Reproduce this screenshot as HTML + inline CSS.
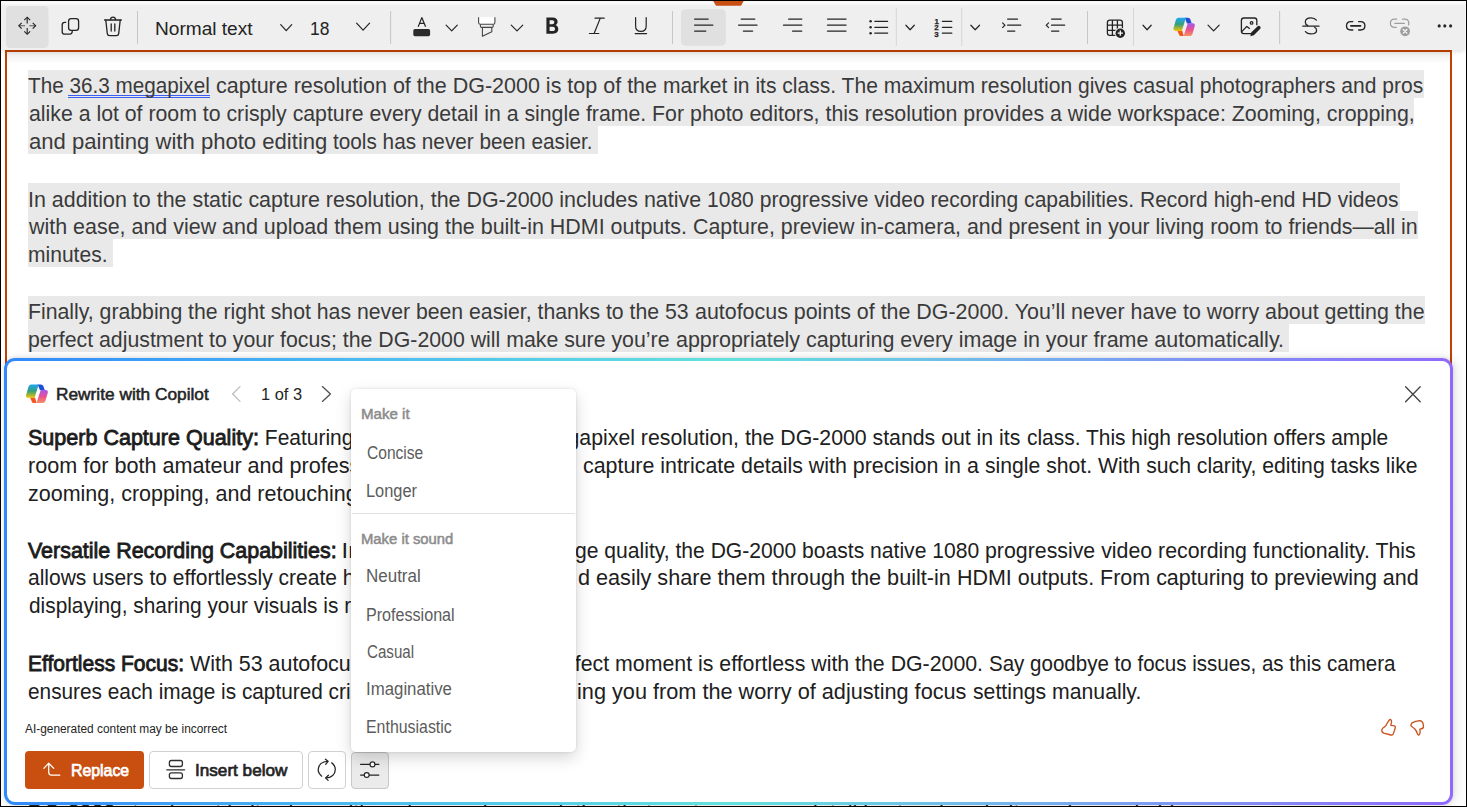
<!DOCTYPE html>
<html><head><meta charset="utf-8">
<style>
html,body{margin:0;padding:0;}
body{width:1467px;height:807px;position:relative;overflow:hidden;background:#fff;font-family:"Liberation Sans",sans-serif;}
.a{position:absolute;}
.t{position:absolute;white-space:pre;transform-origin:0 0;}
.hl{position:absolute;background:#e9e9e9;}
#tb{position:absolute;left:2px;top:2px;width:1462px;height:48px;background:linear-gradient(#fdfdfd 0px,#f6f6f6 2px,#efefef 4px,#efefef 100%);box-shadow:0 1px 5px rgba(0,0,0,0.15);}
#docsh{position:absolute;left:7px;top:52px;width:1443px;height:12px;background:linear-gradient(rgba(0,0,0,0.075),rgba(0,0,0,0));}
#panel{position:absolute;left:4px;top:358px;width:1449px;height:447px;box-sizing:border-box;border:3px solid transparent;border-radius:11px;
 background:linear-gradient(#fff,#fff) padding-box, linear-gradient(90deg,#3089fb 0%,#4bbcf1 25%,#62e2dc 50%,#78a6f1 75%,#8f68fc 100%) border-box;
 box-shadow:0 0 4px rgba(0,0,0,0.12),4px 0 12px rgba(0,0,0,0.09);}
#menu{position:absolute;left:351px;top:389px;width:225px;height:363px;background:#fff;border-radius:5px;box-shadow:0 0 3px rgba(0,0,0,0.12),0 6px 16px rgba(0,0,0,0.16);}
.btn{position:absolute;box-sizing:border-box;border-radius:4px;}
</style></head><body>
<!-- outer black frame -->
<div class="a" style="left:0;top:0;width:1467px;height:1px;background:#000;z-index:50"></div>
<div class="a" style="left:0;top:0;width:1px;height:807px;background:#000;z-index:50"></div>
<div class="a" style="left:1466px;top:0;width:1px;height:807px;background:#000;z-index:50"></div>
<div class="a" style="left:0;top:806px;width:1467px;height:1px;background:#000;z-index:50"></div>

<!-- doc frame -->
<div class="a" style="left:5px;top:50px;width:1447px;height:330px;box-sizing:border-box;border:2px solid #c24102;border-bottom:none;"></div>
<div id="docsh"></div>
<div class='hl' style='left:28px;top:70.00px;width:1396.0px;height:27.93px'></div><div class='hl' style='left:28px;top:97.93px;width:1386.0px;height:27.93px'></div><div class='hl' style='left:28px;top:125.86px;width:569.9px;height:27.93px'></div><div class='hl' style='left:28px;top:183.20px;width:1371.9px;height:27.93px'></div><div class='hl' style='left:28px;top:211.13px;width:1390.0px;height:27.93px'></div><div class='hl' style='left:28px;top:239.06px;width:85.0px;height:27.93px'></div><div class='hl' style='left:28px;top:296.00px;width:1397.0px;height:27.93px'></div><div class='hl' style='left:28px;top:323.93px;width:1260.8px;height:27.93px'></div>
<div class="a" style="left:68px;top:95px;width:142px;height:1px;background:#3d5ef0"></div>
<div class="a" style="left:68px;top:97px;width:142px;height:1px;background:#3d5ef0"></div>
<div class='t' style='left:28.20px;top:73.36px;font:400 21.6px/25.92px "Liberation Sans", sans-serif;color:#3a3a3a;transform:scaleX(0.9583)'>The 36.3 megapixel </div>
<div class='t' style='left:215.70px;top:73.36px;font:400 21.6px/25.92px "Liberation Sans", sans-serif;color:#3a3a3a;transform:scaleX(0.9957)'>capture resolution of the DG-2000 is top of the </div>
<div class='t' style='left:662.72px;top:73.36px;font:400 21.6px/25.92px "Liberation Sans", sans-serif;color:#3a3a3a;transform:scaleX(0.9750)'>market in its class. The maximum resolution gives casual photographers and pros</div>
<div class='t' style='left:28.70px;top:101.29px;font:400 21.6px/25.92px "Liberation Sans", sans-serif;color:#3a3a3a;transform:scaleX(0.9851)'>alike a lot of room to crisply capture every detail in a single frame. For </div>
<div class='t' style='left:689.61px;top:101.29px;font:400 21.6px/25.92px "Liberation Sans", sans-serif;color:#3a3a3a;transform:scaleX(0.9899)'>photo editors, this resolution provides a wide workspace: Zooming, cropping,</div>
<div class='t' style='left:28.70px;top:129.22px;font:400 21.6px/25.92px "Liberation Sans", sans-serif;color:#3a3a3a;transform:scaleX(1.0227)'>and painting with photo editing </div>
<div class='t' style='left:333.20px;top:129.22px;font:400 21.6px/25.92px "Liberation Sans", sans-serif;color:#3a3a3a;transform:scaleX(0.9610)'>tools has never been easier.</div>
<div class='t' style='left:27.81px;top:186.56px;font:400 21.6px/25.92px "Liberation Sans", sans-serif;color:#3a3a3a;transform:scaleX(0.9925)'>In addition to the static capture resolution, the DG-2000 includes native </div>
<div class='t' style='left:706.93px;top:186.56px;font:400 21.6px/25.92px "Liberation Sans", sans-serif;color:#3a3a3a;transform:scaleX(0.9748)'>1080 progressive video recording capabilities. Record high-end HD videos</div>
<div class='t' style='left:29.29px;top:214.49px;font:400 21.6px/25.92px "Liberation Sans", sans-serif;color:#3a3a3a;transform:scaleX(0.9929)'>with ease, and view and upload them using the built-in HDMI outputs. </div>
<div class='t' style='left:693.11px;top:214.49px;font:400 21.6px/25.92px "Liberation Sans", sans-serif;color:#3a3a3a;transform:scaleX(0.9882)'>Capture, preview in-camera, and present in your living room to friends—all in</div>
<div class='t' style='left:28.13px;top:242.42px;font:400 21.6px/25.92px "Liberation Sans", sans-serif;color:#3a3a3a;transform:scaleX(0.9748)'>minutes.</div>
<div class='t' style='left:28.22px;top:299.36px;font:400 21.6px/25.92px "Liberation Sans", sans-serif;color:#3a3a3a;transform:scaleX(0.9833)'>Finally, grabbing the right shot has never been easier, thanks to the 53 </div>
<div class='t' style='left:694.70px;top:299.36px;font:400 21.6px/25.92px "Liberation Sans", sans-serif;color:#3a3a3a;transform:scaleX(0.9914)'>autofocus points of the DG-2000. You’ll never have to worry about getting the</div>
<div class='t' style='left:28.11px;top:327.29px;font:400 21.6px/25.92px "Liberation Sans", sans-serif;color:#3a3a3a;transform:scaleX(0.9861)'>perfect adjustment to your focus; the DG-2000 will make sure you’re </div>
<div class='t' style='left:675.50px;top:327.29px;font:400 21.6px/25.92px "Liberation Sans", sans-serif;color:#3a3a3a;transform:scaleX(0.9939)'>appropriately capturing every image in your frame automatically.</div>
<!-- text peeking below panel -->
<div class="t" style="left:28px;top:801px;font:400 21.6px/24px 'Liberation Sans',sans-serif;color:#222"><span style="-webkit-text-stroke:0.8px #222">DG-2000</span> stands out in its class with an impressive resolution that captures every detail in stunning clarity and remarkable</div>

<!-- toolbar -->
<div id="tb"></div>
<svg class="a" style="left:0;top:0" width="1467" height="50" viewBox="0 0 1467 50"><rect x="6" y="6" width="42.5" height="42" rx="4.5" fill="#e0e0e0"/>
<rect x="681" y="9.2" width="44.8" height="36.5" rx="4.5" fill="#e0e0e0"/>
<path d="M713.2,1 L743.7,1 L741,5.8 L716,5.8 Z" fill="#c84f14"/>
<rect x="137.0" y="11" width="1" height="33" fill="#c6c6c6"/>
<rect x="390.1" y="11" width="1" height="33" fill="#c6c6c6"/>
<rect x="672.0" y="11" width="1" height="33" fill="#c6c6c6"/>
<rect x="1087.0" y="11" width="1" height="33" fill="#c6c6c6"/>
<rect x="1279.1" y="11" width="1" height="33" fill="#c6c6c6"/>
<rect x="895.8" y="7.5" width="1" height="38.5" fill="#d6d6d6"/>
<rect x="961.3" y="7.5" width="1" height="38.5" fill="#d6d6d6"/>
<rect x="1133.0" y="7.5" width="1" height="38.5" fill="#d6d6d6"/>
<g fill="none" stroke="#242424" stroke-width="1.15" stroke-linecap="butt" stroke-linejoin="miter"><path d="M27.2,17.6 V23.4 M27.2,28.1 V34.0"/><path d="M19.2,25.7 H25.0 M29.4,25.7 H35.4" stroke="#5a5a5a"/><path d="M24.3,20.1 L27.2,17.2 L30.1,20.1"/><path d="M24.3,31.4 L27.2,34.3 L30.1,31.4"/><path d="M21.7,22.8 L18.8,25.7 L21.7,28.6"/><path d="M32.7,22.8 L35.6,25.7 L32.7,28.6"/></g>
<g fill="none" stroke="#242424" stroke-width="1.3" stroke-linejoin="round"><rect x="68.6" y="18.6" width="10" height="11.8" rx="2.6"/><path d="M66.2,22.4 H64.6 C63.1,22.4 62.2,23.4 62.2,24.9 V31.7 C62.2,33.2 63.3,34.2 64.8,34.2 H69.8 C71.2,34.2 72.2,33.3 72.3,31.0"/></g>
<g fill="none" stroke="#242424" stroke-width="1.3" stroke-linecap="round" stroke-linejoin="round"><path d="M104.6,20 H121.3"/><path d="M110.4,19.6 C110.6,17.9 111.6,17.2 113,17.2 C114.4,17.2 115.4,17.9 115.6,19.6"/><path d="M105.8,20.2 L107.3,33.6 C107.5,35 108.3,35.6 109.5,35.6 H116.5 C117.7,35.6 118.5,35 118.7,33.6 L120.2,20.2"/><path d="M111.2,24 V31 M114.8,24 V31"/></g>
<path d="M280.70,24.70 L286.20,30.70 L291.70,24.70" fill="none" stroke="#242424" stroke-width="1.2" stroke-linecap="round" stroke-linejoin="round"/>
<path d="M356.60,23.20 L363.10,30.20 L369.60,23.20" fill="none" stroke="#242424" stroke-width="1.2" stroke-linecap="round" stroke-linejoin="round"/>
<path d="M446.10,25.15 L451.70,30.85 L457.30,25.15" fill="none" stroke="#242424" stroke-width="1.2" stroke-linecap="round" stroke-linejoin="round"/>
<path d="M511.25,25.15 L517.00,30.85 L522.75,25.15" fill="none" stroke="#242424" stroke-width="1.2" stroke-linecap="round" stroke-linejoin="round"/>
<path d="M905.90,25.25 L910.10,29.75 L914.30,25.25" fill="none" stroke="#242424" stroke-width="1.2" stroke-linecap="round" stroke-linejoin="round"/>
<path d="M970.85,25.25 L975.20,29.75 L979.55,25.25" fill="none" stroke="#242424" stroke-width="1.2" stroke-linecap="round" stroke-linejoin="round"/>
<path d="M1143.00,25.25 L1147.10,29.75 L1151.20,25.25" fill="none" stroke="#242424" stroke-width="1.2" stroke-linecap="round" stroke-linejoin="round"/>
<path d="M1208.00,25.15 L1213.60,30.85 L1219.20,25.15" fill="none" stroke="#242424" stroke-width="1.2" stroke-linecap="round" stroke-linejoin="round"/>
<path d="M418.2,26.8 L421.8,17.6 L425.6,26.8 M419.6,23.4 H424.2" fill="none" stroke="#242424" stroke-width="1.2" stroke-linejoin="round"/>
<rect x="413.3" y="29.1" width="16.8" height="7.1" rx="1.6" fill="#2b2b2b"/>
<g fill="none" stroke="#444" stroke-width="1.1" stroke-linejoin="round"><path d="M478.6,17.2 V22.4 C478.6,23.6 479.4,24.2 480.4,24.2 H493.2 C494.2,24.2 494.9,23.6 494.9,22.4 V17.2" fill="#fff"/><path d="M480.4,24.4 V26.2 C480.4,27 481,27.4 481.8,27.4 H491.8 C492.6,27.4 493.2,27 493.2,26.2 V24.4"/><path d="M482.4,27.4 V36.2 L491.8,31.7 V27.4"/></g>
<path fill-rule="evenodd" fill="#242424" d="M546.4,17.6 H552.7 C555.9,17.6 557.6,19.3 557.6,21.7 C557.6,23.3 556.7,24.6 555.3,25.1 C557.1,25.6 558.3,27.1 558.3,29.1 C558.3,32 556.2,33.8 552.9,33.8 H546.4 Z M549.6,20.3 V24.2 H552.1 C553.5,24.2 554.3,23.5 554.3,22.25 C554.3,21 553.5,20.3 552.1,20.3 Z M549.6,26.8 V31.1 H552.6 C554.2,31.1 555,30.3 555,28.95 C555,27.6 554.2,26.8 552.6,26.8 Z"/>
<g fill="none" stroke="#242424" stroke-width="1.2" stroke-linecap="round"><path d="M595,18.2 H604.2 M589.4,33.5 H598.8 M600.2,18.4 L594.2,33.3"/></g>
<g fill="none" stroke="#242424" stroke-width="1.2" stroke-linecap="round"><path d="M635.6,17.6 V26 C635.6,29.4 637.8,31.4 640.9,31.4 C644,31.4 646.2,29.4 646.2,26 V17.6 M635.2,33.6 H646.6"/></g>
<line x1="694.6" y1="19.1" x2="708.2" y2="19.1" stroke="#242424" stroke-width="1.25" stroke-linecap="round"/><line x1="694.6" y1="25.2" x2="712.8" y2="25.2" stroke="#242424" stroke-width="1.25" stroke-linecap="round"/><line x1="694.6" y1="31.1" x2="705.8" y2="31.1" stroke="#242424" stroke-width="1.25" stroke-linecap="round"/>
<line x1="741.2" y1="19.1" x2="754.8" y2="19.1" stroke="#242424" stroke-width="1.25" stroke-linecap="round"/><line x1="738.6" y1="25.2" x2="757.0" y2="25.2" stroke="#242424" stroke-width="1.25" stroke-linecap="round"/><line x1="743.4" y1="31.1" x2="752.6" y2="31.1" stroke="#242424" stroke-width="1.25" stroke-linecap="round"/>
<line x1="788.6" y1="19.1" x2="801.8" y2="19.1" stroke="#242424" stroke-width="1.25" stroke-linecap="round"/><line x1="783.5" y1="25.2" x2="801.8" y2="25.2" stroke="#242424" stroke-width="1.25" stroke-linecap="round"/><line x1="792.5" y1="31.1" x2="801.8" y2="31.1" stroke="#242424" stroke-width="1.25" stroke-linecap="round"/>
<line x1="827.5" y1="19.1" x2="846.0" y2="19.1" stroke="#242424" stroke-width="1.25" stroke-linecap="round"/><line x1="827.5" y1="25.2" x2="846.0" y2="25.2" stroke="#242424" stroke-width="1.25" stroke-linecap="round"/><line x1="827.5" y1="31.1" x2="846.0" y2="31.1" stroke="#242424" stroke-width="1.25" stroke-linecap="round"/>
<circle cx="870.6" cy="21.3" r="1.25" fill="#242424"/>
<line x1="874.8" y1="21.3" x2="887.6" y2="21.3" stroke="#242424" stroke-width="1.25" stroke-linecap="round"/>
<circle cx="870.6" cy="27.3" r="1.25" fill="#242424"/>
<line x1="874.8" y1="27.3" x2="887.6" y2="27.3" stroke="#242424" stroke-width="1.25" stroke-linecap="round"/>
<circle cx="870.6" cy="33.2" r="1.25" fill="#242424"/>
<line x1="874.8" y1="33.2" x2="887.6" y2="33.2" stroke="#242424" stroke-width="1.25" stroke-linecap="round"/>
<g font-family="Liberation Sans" font-weight="700" font-size="7.9" fill="#242424" stroke="#242424" stroke-width="0.25"><text x="934.5" y="24.3">1</text><text x="934.3" y="30.4">2</text><text x="934.3" y="36.6">3</text></g>
<line x1="942.4" y1="21.3" x2="951.8" y2="21.3" stroke="#242424" stroke-width="1.25" stroke-linecap="round"/>
<line x1="942.4" y1="27.3" x2="951.8" y2="27.3" stroke="#242424" stroke-width="1.25" stroke-linecap="round"/>
<line x1="942.4" y1="33.2" x2="951.8" y2="33.2" stroke="#242424" stroke-width="1.25" stroke-linecap="round"/>
<line x1="1007.6" y1="19.1" x2="1017.5" y2="19.1" stroke="#242424" stroke-width="1.25" stroke-linecap="round"/><line x1="1007.6" y1="25.2" x2="1020.7" y2="25.2" stroke="#242424" stroke-width="1.25" stroke-linecap="round"/><line x1="1007.6" y1="31.1" x2="1014.8" y2="31.1" stroke="#242424" stroke-width="1.25" stroke-linecap="round"/>
<path d="M1002.3,22.6 L1004.9,25.2 L1002.3,27.8" fill="none" stroke="#242424" stroke-width="1.2"/>
<line x1="1051.5" y1="19.1" x2="1061.2" y2="19.1" stroke="#242424" stroke-width="1.25" stroke-linecap="round"/><line x1="1051.5" y1="25.2" x2="1064.6" y2="25.2" stroke="#242424" stroke-width="1.25" stroke-linecap="round"/><line x1="1051.5" y1="31.1" x2="1058.8" y2="31.1" stroke="#242424" stroke-width="1.25" stroke-linecap="round"/>
<path d="M1048.9,22.6 L1046.3,25.2 L1048.9,27.8" fill="none" stroke="#242424" stroke-width="1.2"/>
<g fill="none" stroke="#242424" stroke-width="1.3"><rect x="1107.4" y="20.1" width="15" height="15.3" rx="2.4"/><path d="M1112.4,20.1 V35.4 M1117.4,20.1 V30 M1107.4,25.2 H1122.4 M1107.4,30.3 H1117"/></g>
<circle cx="1120.3" cy="33.2" r="5.6" fill="#f0f0f0"/><circle cx="1120.3" cy="33.2" r="4.7" fill="#242424"/>
<path d="M1120.3,30.6 V35.8 M1117.7,33.2 H1122.9" stroke="#fff" stroke-width="1.3"/>
<defs><linearGradient id="lg1tb" x1="0" y1="0" x2="0" y2="1"><stop offset="0" stop-color="#1ea6f7"/><stop offset="0.5" stop-color="#36a07c"/><stop offset="1" stop-color="#f3c400"/></linearGradient>
<linearGradient id="lg2tb" x1="0" y1="0" x2="0" y2="1"><stop offset="0" stop-color="#a259f0"/><stop offset="0.5" stop-color="#e9508e"/><stop offset="1" stop-color="#fa9060"/></linearGradient></defs><path d="M1184.76,17.79 L1187.90,17.79 C1189.27,17.79 1190.05,18.57 1190.54,19.95 L1191.72,23.38 L1187.02,23.38 Z" fill="#1f4fd6"/><path d="M1177.31,30.73 L1182.21,30.73 L1183.78,36.12 L1181.14,36.12 C1180.06,36.12 1179.37,35.53 1179.08,34.55 Z" fill="#f2551f"/><path d="M1178.49,17.79 L1185.84,17.79 L1181.82,30.92 L1175.45,30.92 C1173.98,30.92 1173.20,29.94 1173.49,28.37 L1175.75,20.34 C1176.24,18.67 1177.12,17.79 1178.49,17.79 Z" fill="url(#lg1tb)"/><path d="M1187.80,23.18 L1192.70,23.18 C1194.37,23.18 1195.15,24.36 1194.76,26.02 L1192.50,33.67 C1192.01,35.23 1191.03,36.02 1189.66,36.02 L1183.68,36.02 Z" fill="url(#lg2tb)"/>
<g fill="none" stroke="#242424" stroke-width="1.3" stroke-linejoin="round"><path d="M1251.8,33.6 H1243.8 C1242.2,33.6 1241.4,32.7 1241.4,31.2 V20.4 C1241.4,18.9 1242.3,18 1243.8,18 H1254.4 C1255.9,18 1256.8,18.9 1256.8,20.4 V25.2"/><path d="M1241.8,31.6 L1246.8,26.4 L1249.8,28.8"/><circle cx="1251.6" cy="22.9" r="1.3"/></g>
<path d="M1250.3,36.2 L1251.2,32.6 L1257.4,26.4 C1258.2,25.6 1259.4,25.6 1260.1,26.4 C1260.8,27.1 1260.8,28.3 1260.0,29.1 L1253.8,35.3 Z" fill="#242424"/>
<g fill="none" stroke="#242424" stroke-width="1.25" stroke-linecap="round"><path d="M1316.3,20.2 C1315.2,18.6 1313.3,17.9 1311.0,17.9 C1307.6,17.9 1305.3,19.7 1305.3,22.2 C1305.3,23.6 1306.1,24.8 1307.8,25.6"/><path d="M1314.6,27.2 C1316.0,28.0 1316.6,29.0 1316.6,30.2 C1316.6,32.4 1314.3,33.9 1311.0,33.9 C1308.5,33.9 1306.6,33.1 1305.4,31.6"/><path d="M1302.8,26.2 H1319.0"/></g>
<g fill="none" stroke="#242424" stroke-width="1.35" stroke-linecap="round"><path d="M1352.8,21.6 H1350.8 C1348.2,21.6 1346.5,23.4 1346.5,25.8 C1346.5,28.2 1348.2,30.0 1350.8,30.0 H1352.8"/><path d="M1358.6,21.6 H1360.6 C1363.2,21.6 1364.9,23.4 1364.9,25.8 C1364.9,28.2 1363.2,30.0 1360.6,30.0 H1358.6"/><path d="M1350.9,25.8 H1360.5" stroke-width="1.8"/></g>
<g fill="none" stroke="#9e9e9e" stroke-width="1.25" stroke-linecap="round"><path d="M1396.6,19.2 H1394.6 C1392.0,19.2 1390.4,21.0 1390.4,23.3 C1390.4,25.6 1392.0,27.4 1394.6,27.4 H1396.2"/><path d="M1402.6,19.2 H1404.6 C1407.2,19.2 1408.8,21.0 1408.8,23.3 C1408.8,24 1408.7,24.5 1408.5,25"/><path d="M1394.8,23.3 H1404.4"/></g>
<circle cx="1405.1" cy="31.3" r="5.6" fill="#f0f0f0"/><circle cx="1405.1" cy="31.3" r="4.9" fill="#9e9e9e"/><path d="M1403.3,29.5 L1406.9,33.1 M1406.9,29.5 L1403.3,33.1" stroke="#fff" stroke-width="1.2" stroke-linecap="round"/>
<circle cx="1439.2" cy="25.9" r="1.55" fill="#242424"/>
<circle cx="1444.8" cy="25.9" r="1.55" fill="#242424"/>
<circle cx="1450.6" cy="25.9" r="1.55" fill="#242424"/></svg>
<div class='t' style='left:155.39px;top:18.31px;font:400 18.9px/22.68px "Liberation Sans", sans-serif;color:#242424;transform:scaleX(1.0103)'>Normal text</div>
<div class='t' style='left:310.28px;top:18.11px;font:400 18.9px/22.68px "Liberation Sans", sans-serif;color:#242424;transform:scaleX(0.9231)'>18</div>

<!-- panel -->
<div id="panel"></div>
<div class='t' style='left:28.10px;top:424.76px;font:400 21.6px/25.92px "Liberation Sans", sans-serif;color:#1c1c1c;transform:scaleX(0.9967);-webkit-text-stroke:0.85px #1c1c1c'>Superb Capture Quality:</div>
<div class='t' style='left:259.12px;top:424.76px;font:400 21.6px/25.92px "Liberation Sans", sans-serif;color:#202020;transform:scaleX(0.9706)'> Featuring an</div>
<div class='t' style='left:27.90px;top:452.69px;font:400 21.6px/25.92px "Liberation Sans", sans-serif;color:#202020;transform:scaleX(0.9998)'>room for both amateur and professional</div>
<div class='t' style='left:28.10px;top:480.62px;font:400 21.6px/25.92px "Liberation Sans", sans-serif;color:#202020;transform:scaleX(0.9950)'>zooming, cropping, and retouching become</div>
<div class='t' style='left:27.60px;top:537.56px;font:400 21.6px/25.92px "Liberation Sans", sans-serif;color:#1c1c1c;transform:scaleX(0.9927);-webkit-text-stroke:0.85px #1c1c1c'>Versatile Recording Capabilities:</div>
<div class='t' style='left:334.72px;top:537.56px;font:400 21.6px/25.92px "Liberation Sans", sans-serif;color:#202020;transform:scaleX(1.1000)'> In addition</div>
<div class='t' style='left:28.10px;top:565.49px;font:400 21.6px/25.92px "Liberation Sans", sans-serif;color:#202020;transform:scaleX(0.9728)'>allows users to effortlessly create high</div>
<div class='t' style='left:28.70px;top:593.42px;font:400 21.6px/25.92px "Liberation Sans", sans-serif;color:#202020;transform:scaleX(0.9653)'>displaying, sharing your visuals is remarkably</div>
<div class='t' style='left:27.83px;top:651.06px;font:400 21.6px/25.92px "Liberation Sans", sans-serif;color:#1c1c1c;transform:scaleX(0.9728);-webkit-text-stroke:0.85px #1c1c1c'>Effortless Focus:</div>
<div class='t' style='left:184.36px;top:651.06px;font:400 21.6px/25.92px "Liberation Sans", sans-serif;color:#202020;transform:scaleX(0.9923)'> With 53 autofocus</div>
<div class='t' style='left:28.20px;top:678.99px;font:400 21.6px/25.92px "Liberation Sans", sans-serif;color:#202020;transform:scaleX(0.9632)'>ensures each image is captured crisply</div>
<div class='t' style='left:538.47px;top:424.76px;font:400 21.6px/25.92px "Liberation Sans", sans-serif;color:#202020;transform:scaleX(0.9849)'>megapixel resolution, the DG-2000 stands out in its </div>
<div class='t' style='left:1026.70px;top:424.76px;font:400 21.6px/25.92px "Liberation Sans", sans-serif;color:#202020;transform:scaleX(0.9697)'>class. This high resolution offers ample</div>
<div class='t' style='left:583.30px;top:452.69px;font:400 21.6px/25.92px "Liberation Sans", sans-serif;color:#202020;transform:scaleX(0.9902)'>capture intricate details with precision in a </div>
<div class='t' style='left:985.00px;top:452.69px;font:400 21.6px/25.92px "Liberation Sans", sans-serif;color:#202020;transform:scaleX(0.9804)'>single shot. With such clarity, editing tasks like</div>
<div class='t' style='left:541.28px;top:537.56px;font:400 21.6px/25.92px "Liberation Sans", sans-serif;color:#202020;transform:scaleX(0.9769)'>image quality, the DG-2000 boasts native 1080 </div>
<div class='t' style='left:985.31px;top:537.56px;font:400 21.6px/25.92px "Liberation Sans", sans-serif;color:#202020;transform:scaleX(0.9876)'>progressive video recording functionality. This</div>
<div class='t' style='left:578.16px;top:565.49px;font:400 21.6px/25.92px "Liberation Sans", sans-serif;color:#202020;transform:scaleX(1.0020)'>d easily share them through the built-in </div>
<div class='t' style='left:957.01px;top:565.49px;font:400 21.6px/25.92px "Liberation Sans", sans-serif;color:#202020;transform:scaleX(0.9938)'>HDMI outputs. From capturing to previewing and</div>
<div class='t' style='left:544.06px;top:651.06px;font:400 21.6px/25.92px "Liberation Sans", sans-serif;color:#202020;transform:scaleX(0.9869)'>perfect moment is effortless with the DG-2000. </div>
<div class='t' style='left:989.00px;top:651.06px;font:400 21.6px/25.92px "Liberation Sans", sans-serif;color:#202020;transform:scaleX(0.9512)'>Say goodbye to focus issues, as this camera</div>
<div class='t' style='left:577.13px;top:678.99px;font:400 21.6px/25.92px "Liberation Sans", sans-serif;color:#202020;transform:scaleX(1.0046)'>ing you from the worry of adjusting focus </div>
<div class='t' style='left:972.60px;top:678.99px;font:400 21.6px/25.92px "Liberation Sans", sans-serif;color:#202020;transform:scaleX(0.9829)'>settings manually.</div>
<div class='t' style='left:55.78px;top:384.61px;font:400 17px/20.4px "Liberation Sans", sans-serif;color:#242424;transform:scaleX(1.0168);-webkit-text-stroke:0.55px #242424'>Rewrite with Copilot</div>
<div class='t' style='left:260.61px;top:385.19px;font:400 16.6px/19.92px "Liberation Sans", sans-serif;color:#242424;transform:scaleX(0.9905)'>1 of 3</div>
<div class='t' style='left:25.30px;top:722.04px;font:400 12px/14.4px "Liberation Sans", sans-serif;color:#242424;transform:scaleX(0.9899)'>AI-generated content may be incorrect</div>
<svg class="a" style="left:0;top:350px" width="1467" height="457" viewBox="0 350 1467 457"><defs><linearGradient id="lg1pn" x1="0" y1="0" x2="0" y2="1"><stop offset="0" stop-color="#1ea6f7"/><stop offset="0.5" stop-color="#36a07c"/><stop offset="1" stop-color="#f3c400"/></linearGradient>
<linearGradient id="lg2pn" x1="0" y1="0" x2="0" y2="1"><stop offset="0" stop-color="#a259f0"/><stop offset="0.5" stop-color="#e9508e"/><stop offset="1" stop-color="#fa9060"/></linearGradient></defs><path d="M37.60,384.40 L40.80,384.40 C42.20,384.40 43.00,385.20 43.50,386.60 L44.70,390.10 L39.90,390.10 Z" fill="#1f4fd6"/><path d="M30.00,397.60 L35.00,397.60 L36.60,403.10 L33.90,403.10 C32.80,403.10 32.10,402.50 31.80,401.50 Z" fill="#f2551f"/><path d="M31.20,384.40 L38.70,384.40 L34.60,397.80 L28.10,397.80 C26.60,397.80 25.80,396.80 26.10,395.20 L28.40,387.00 C28.90,385.30 29.80,384.40 31.20,384.40 Z" fill="url(#lg1pn)"/><path d="M40.70,389.90 L45.70,389.90 C47.40,389.90 48.20,391.10 47.80,392.80 L45.50,400.60 C45.00,402.20 44.00,403.00 42.60,403.00 L36.50,403.00 Z" fill="url(#lg2pn)"/>
<path d="M240,386.6 L232.6,394 L240,401.4" fill="none" stroke="#bdbdbd" stroke-width="1.25" stroke-linecap="round" stroke-linejoin="round"/>
<path d="M322.4,386.6 L330.4,394 L322.4,401.4" fill="none" stroke="#505050" stroke-width="1.35" stroke-linecap="round" stroke-linejoin="round"/>
<path d="M1405.6,386.8 L1420.2,401.8 M1420.2,386.8 L1405.6,401.8" fill="none" stroke="#424242" stroke-width="1.3" stroke-linecap="round"/>
<path d="M1389.6,719.6 C1390.9,719.2 1391.8,720.4 1391.5,722.2 L1390.8,725.3 L1393.8,725.6 C1395.0,725.8 1395.6,726.8 1395.2,728.0 L1393.4,733.6 C1393.0,734.8 1392.0,735.3 1390.9,735.0 L1383.8,733.1 C1382.4,732.6 1381.6,731.6 1381.8,730.0 C1382.0,728.7 1382.9,727.8 1384.2,727.2 C1385.6,726.4 1386.6,724.8 1387.4,722.8 Z" fill="none" stroke="#c8501a" stroke-width="1.3" stroke-linejoin="round"/>
<path d="M1411.9,722.9 C1414.3,721.6 1417.2,720.7 1419.6,720.6 C1421.4,720.8 1422.6,722.0 1423.1,723.6 L1423.5,726.6 C1423.4,728.0 1422.2,728.9 1419.9,729.2 L1420.1,732.4 C1420.0,734.0 1419.3,735.0 1418.5,735.1 C1417.8,735.0 1417.4,734.2 1417.2,733.2 C1416.6,731.2 1415.6,729.9 1414.6,728.8 C1413.6,727.6 1412.3,726.8 1411.3,726.2 C1410.8,725.4 1410.9,724.2 1411.9,722.9 Z" fill="none" stroke="#c8501a" stroke-width="1.3" stroke-linejoin="round"/></svg>
<!-- buttons -->
<div class="btn" style="left:25px;top:751px;width:119px;height:38px;background:#c84f10;"></div>
<div class="btn" style="left:149px;top:751px;width:154px;height:38px;border:1px solid #d1d1d1;background:#fff"></div>
<div class="btn" style="left:308px;top:751px;width:38px;height:38px;border:1px solid #d1d1d1;background:#fff"></div>
<div class="btn" style="left:351px;top:752px;width:38px;height:37px;border:1px solid #c8c8c8;background:#ebebeb"></div>
<svg class="a" style="left:0;top:740px" width="500" height="60" viewBox="0 740 500 60"><path d="M43.8,768.4 L48.7,763.2 L53.8,768.4 M48.7,763.4 V772.2 C48.7,774 49.7,775 51.5,775 H59.8" fill="none" stroke="#fff" stroke-width="1.25" stroke-linecap="round" stroke-linejoin="round"/>
<g fill="none" stroke="#2e2e2e" stroke-width="1.3"><rect x="169.4" y="760.5" width="13" height="6" rx="2"/><rect x="169.4" y="772.8" width="13" height="5.7" rx="2"/><path d="M166.8,769.8 H184.6" stroke-linecap="round"/></g>
<g fill="none" stroke="#242424" stroke-width="1.25" stroke-linecap="round" stroke-linejoin="round"><path d="M321.7,776.2 C319.4,774.4 318.2,772 318.2,769.6 C318.2,764.8 322,761.3 327.6,761.3"/><path d="M325.4,759.2 L328.1,761.3 L325.7,764.3"/><path d="M331.6,762.8 C333.9,764.6 335.3,767 335.3,769.6 C335.3,774.4 331.5,777.9 325.9,777.9"/><path d="M328.4,775.2 L325.7,777.9 L328.1,780.4"/></g>
<g stroke="#242424" stroke-width="1.25" stroke-linecap="round"><path d="M360.6,764.4 H370 M375,764.4 H378.8 M360.6,775 H364.2 M369.2,775 H378.8"/></g><circle cx="372.5" cy="764.4" r="2.45" fill="#fff" stroke="#242424" stroke-width="1.2"/><circle cx="366.7" cy="775" r="2.45" fill="#fff" stroke="#242424" stroke-width="1.2"/></svg>
<div class='t' style='left:70.84px;top:761.29px;font:400 16.6px/19.92px "Liberation Sans", sans-serif;color:#ffffff;transform:scaleX(0.9557);-webkit-text-stroke:0.75px #ffffff'>Replace</div>
<div class='t' style='left:194.89px;top:761.11px;font:400 17px/20.4px "Liberation Sans", sans-serif;color:#242424;transform:scaleX(1.0079);-webkit-text-stroke:0.7px #242424'>Insert below</div>

<!-- menu -->
<div id="menu"></div>
<div class="a" style="left:352px;top:513px;width:223px;height:1px;background:#e0e0e0"></div>
<div class='t' style='left:360.52px;top:406.35px;font:400 14px/16.8px "Liberation Sans", sans-serif;color:#8c8c8c;transform:scaleX(1.0783);-webkit-text-stroke:0.5px #8c8c8c'>Make it</div>
<div class='t' style='left:360.54px;top:530.55px;font:400 14px/16.8px "Liberation Sans", sans-serif;color:#8c8c8c;transform:scaleX(1.0591);-webkit-text-stroke:0.5px #8c8c8c'>Make it sound</div>
<div class='t' style='left:367.10px;top:442.74px;font:400 17.5px/21.0px "Liberation Sans", sans-serif;color:#5c5c5c;transform:scaleX(0.8898)'>Concise</div>
<div class='t' style='left:366.16px;top:480.84px;font:400 17.5px/21.0px "Liberation Sans", sans-serif;color:#5c5c5c;transform:scaleX(0.9374)'>Longer</div>
<div class='t' style='left:366.13px;top:566.44px;font:400 17.5px/21.0px "Liberation Sans", sans-serif;color:#5c5c5c;transform:scaleX(0.9704)'>Neutral</div>
<div class='t' style='left:366.18px;top:604.54px;font:400 17.5px/21.0px "Liberation Sans", sans-serif;color:#5c5c5c;transform:scaleX(0.9205)'>Professional</div>
<div class='t' style='left:367.10px;top:642.24px;font:400 17.5px/21.0px "Liberation Sans", sans-serif;color:#5c5c5c;transform:scaleX(0.8642)'>Casual</div>
<div class='t' style='left:366.14px;top:679.34px;font:400 17.5px/21.0px "Liberation Sans", sans-serif;color:#5c5c5c;transform:scaleX(0.9607)'>Imaginative</div>
<div class='t' style='left:366.19px;top:716.74px;font:400 17.5px/21.0px "Liberation Sans", sans-serif;color:#5c5c5c;transform:scaleX(0.9092)'>Enthusiastic</div>
</body></html>
